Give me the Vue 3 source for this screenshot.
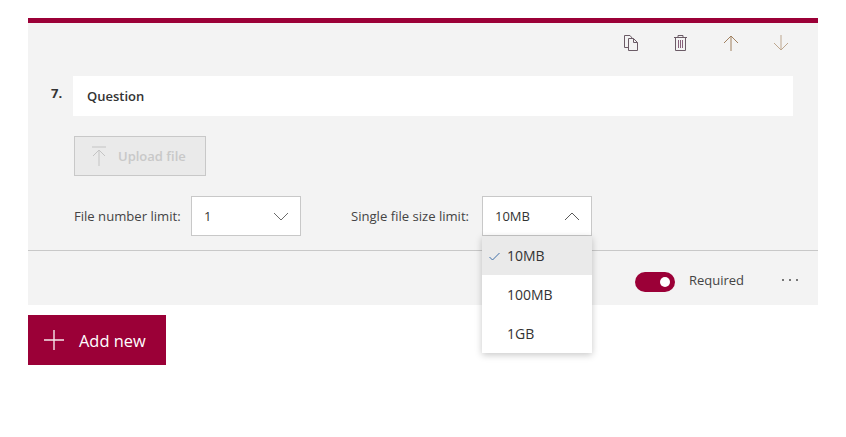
<script setup>
const options = [
  { label: '10MB', selected: true },
  { label: '100MB', selected: false },
  { label: '1GB', selected: false }
]
</script>

<template>
  <main class="page">
    <section class="card">
      <div class="toolbar">
        <button class="tool" aria-label="Copy">
          <svg width="16" height="18" viewBox="0 0 16 18" fill="none" stroke="#6b5b66" stroke-width="1">
            <path d="M5.5 13.5H1.5V1.5H7L9.5 4.5" />
            <path d="M5.5 4.5H10.5L14.5 8.5V16.5H5.5Z" />
            <path d="M10.5 4.5V8.5H14.5" />
          </svg>
        </button>
        <button class="tool" aria-label="Delete">
          <svg width="15" height="18" viewBox="1 0 15 18" fill="none" stroke="#6b5b66" stroke-width="1">
            <path d="M1 3.5H14M5 3.5V1.5H10V3.5M2.5 3.5V16.5H12.5V3.5" />
            <path d="M5.5 6V14M7.5 6V14M9.5 6V14" stroke="#86607a" />
          </svg>
        </button>
        <button class="tool" aria-label="Move up">
          <svg width="16" height="16" viewBox="0 0 16 16" fill="none" stroke="#a0805f" stroke-width="1">
            <path d="M8 16V1M1 8L8 1L15 8" />
          </svg>
        </button>
        <button class="tool" aria-label="Move down">
          <svg width="16" height="16" viewBox="0 0 16 16" fill="none" stroke="#bda78f" stroke-width="1">
            <path d="M8 0V15M1 8L8 15L15 8" />
          </svg>
        </button>
      </div>

      <div class="body">
        <div class="question-row">
          <span class="number">7.</span>
          <div class="question">Question</div>
        </div>

        <button class="upload" disabled>
          <svg width="14" height="20" viewBox="0 0 14 20" fill="none" stroke="#c4c4c4" stroke-width="1">
            <path d="M0 1H14M7 20V4M1 10L7 4L13 10" />
          </svg>
          <span>Upload file</span>
        </button>

        <div class="limits">
          <label class="limit-label first">File number limit:</label>
          <div class="select narrow">
            <span>1</span>
            <svg width="16" height="9" viewBox="0 0 16 9" fill="none" stroke="#6b6b6b" stroke-width="1">
              <path d="M1 1L8 8L15 1" />
            </svg>
          </div>
          <label class="limit-label second">Single file size limit:</label>
          <div class="select-wrap">
            <div class="select">
              <span>10MB</span>
              <svg width="16" height="9" viewBox="0 0 16 9" fill="none" stroke="#5a5a5a" stroke-width="1">
                <path d="M1 8L8 1L15 8" />
              </svg>
            </div>
            <ul class="menu">
              <li v-for="o in options" :key="o.label" :class="{ selected: o.selected }">
                <svg v-if="o.selected" class="check" width="11" height="9" viewBox="0 0 11 9" fill="none" stroke="#3f6fa8" stroke-width="1">
                  <path d="M0.5 5L3.5 8L10.5 1" />
                </svg>
                {{ o.label }}
              </li>
            </ul>
          </div>
        </div>
      </div>

      <div class="footer">
        <span class="toggle"><i></i></span>
        <span class="required">Required</span>
        <span class="more" aria-label="More"><i></i><i></i><i></i></span>
      </div>
    </section>

    <button class="add">
      <svg width="20" height="20" viewBox="0 0 20 20" fill="none" stroke="#f6e6ea" stroke-width="1.4">
        <path d="M10 0V20M0 10H20" />
      </svg>
      <span>Add new</span>
    </button>
  </main>
</template>

<style scoped>
.page {
  width: 846px;
  height: 437px;
  padding: 18px 28px 0;
  box-sizing: border-box;
  font-family: "Open Sans", "Noto Sans", sans-serif;
  color: #333;
  overflow: hidden;
}
.card {
  width: 790px;
  height: 287px;
  box-sizing: border-box;
  border-top: 5px solid #9b0037;
  background: #f3f3f3;
  display: flex;
  flex-direction: column;
}
.toolbar {
  height: 40px;
  display: flex;
  justify-content: flex-end;
  align-items: center;
  padding: 0 12px 0 0;
}
.tool {
  width: 50px;
  height: 40px;
  padding: 0;
  border: 0;
  background: none;
  display: flex;
  align-items: center;
  justify-content: center;
}
.body {
  flex: 1;
  padding: 13px 25px 0 23px;
}
.question-row {
  display: flex;
  align-items: flex-start;
}
.number {
  width: 22px;
  font-size: 13px;
  font-weight: 700;
  line-height: 34px;
  color: #333;
}
.question {
  flex: 1;
  height: 40px;
  background: #fff;
  padding-left: 14px;
  font-size: 13px;
  font-weight: 600;
  line-height: 40px;
  color: #333;
}
.upload {
  margin: 20px 0 0 23px;
  width: 132px;
  height: 40px;
  box-sizing: border-box;
  border: 1px solid #c8c8c8;
  background: #eaeaea;
  display: flex;
  align-items: center;
  padding: 0 0 0 17px;
  gap: 12px;
  font-family: inherit;
  font-size: 13px;
  font-weight: 600;
  color: #c8c8c8;
}
.limits {
  margin: 20px 0 0 23px;
  display: flex;
  align-items: center;
  font-size: 13.1px;
  color: #444;
}
.limit-label {
  white-space: nowrap;
}
.first {
  width: 117px;
}
.second {
  width: 131px;
  margin-left: 50px;
}
.select-wrap {
  position: relative;
}
.select {
  width: 110px;
  height: 40px;
  box-sizing: border-box;
  border: 1px solid #c8c8c8;
  background: #fff;
  display: flex;
  align-items: center;
  justify-content: space-between;
  padding: 0 11px 0 12px;
  font-size: 13px;
  color: #333;
}
.menu {
  position: absolute;
  top: 40px;
  left: 0;
  width: 110px;
  margin: 0;
  padding: 0;
  list-style: none;
  background: #fff;
  box-shadow: 0 2px 7px rgba(0, 0, 0, 0.22);
  z-index: 2;
}
.menu li {
  position: relative;
  height: 39px;
  padding-left: 25px;
  font-size: 14px;
  line-height: 39px;
  color: #333;
}
.menu li.selected {
  background: #eaeaea;
}
.check {
  position: absolute;
  left: 7px;
  top: 16px;
}
.footer {
  height: 55px;
  box-sizing: border-box;
  border-top: 1px solid #c8c8c8;
  display: flex;
  align-items: center;
  padding: 7px 20px 0 0;
  justify-content: flex-end;
}
.toggle {
  width: 40px;
  height: 20px;
  border-radius: 10px;
  background: #9b0037;
  position: relative;
}
.toggle i {
  position: absolute;
  right: 5px;
  top: 5px;
  width: 10px;
  height: 10px;
  border-radius: 50%;
  background: #fff;
}
.required {
  margin: 0 0 4px 14px;
  font-size: 13px;
  color: #444;
}
.more {
  margin-left: 38px;
  display: flex;
  gap: 5px;
  padding-bottom: 4px;
}
.more i {
  width: 2px;
  height: 2px;
  background: #777;
}
.add {
  margin-top: 10px;
  width: 138px;
  height: 50px;
  border: 0;
  background: #9b0037;
  display: flex;
  align-items: center;
  padding: 0 0 0 16px;
  gap: 15px;
  font-family: inherit;
  font-size: 16.4px;
  color: #fff;
}
</style>

<style>
body { background: #fff; }
</style>
